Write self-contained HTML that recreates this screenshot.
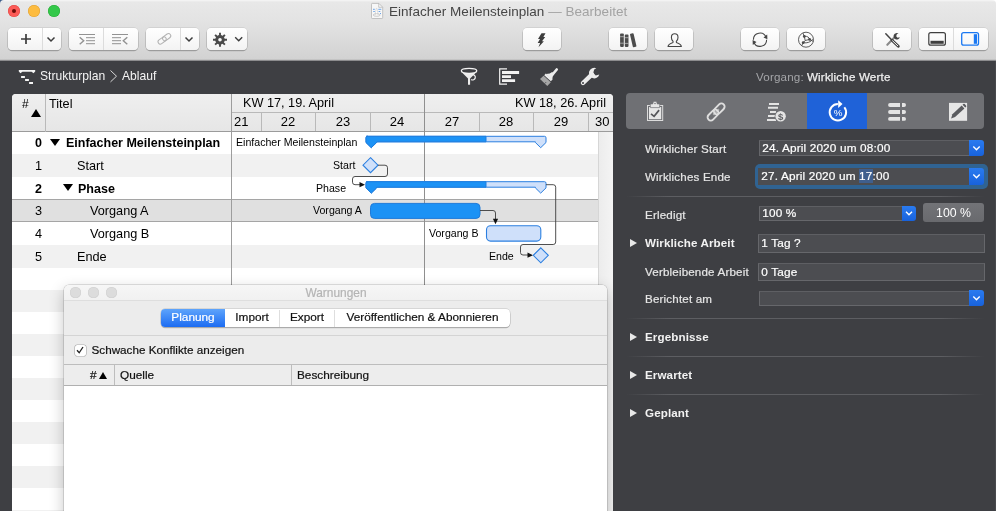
<!DOCTYPE html>
<html lang="de">
<head>
<meta charset="utf-8">
<title>Einfacher Meilensteinplan</title>
<style>
*{box-sizing:border-box;margin:0;padding:0}
html,body{width:996px;height:511px;overflow:hidden;background:#3e3f43;font-family:"Liberation Sans",sans-serif;color:#000}
.abs{position:absolute}
#app{will-change:transform;position:relative;width:996px;height:511px;overflow:hidden;background:#3e3f43}
/* title + toolbar */
#chrome{left:0;top:0;width:996px;height:61px;background:linear-gradient(#f6f6f6 0,#f0f0f0 1px,#e8e8e8 2px,#e3e3e3 22px,#d2d2d2 59px,#c4c4c4 59.500px,#8c8c8e 60.500px,#6a6b6e 61px);border-radius:4px 4px 0 0}
.tl{width:12px;height:12px;border-radius:50%;top:5px}
.tbtn{top:28px;height:22px;background:linear-gradient(#ffffff,#f3f3f3);border-radius:4px;box-shadow:0 0 0 .5px rgba(0,0,0,.13),0 1px 0 .3px rgba(0,0,0,.22)}
.tdiv{top:28px;height:22px;width:1px;background:#dcdcdc}
#title{top:3.500px;left:389px;font-size:13.5px;color:#464646;white-space:nowrap;letter-spacing:.03px}
#title span{color:#a3a3a3}
/* dark bar */
.crumb{color:#f4f4f4;font-size:12.1px;top:69.400px;white-space:nowrap}
/* table */
#tbl{left:12px;top:94px;width:601px;height:417px;background:#fff;border-radius:4px 4px 0 0;overflow:hidden}
.row{left:0;width:586px}
.hd{left:0;top:0;width:601px;height:38px;background:linear-gradient(#efefef,#e6e6e6);border-bottom:1px solid #9b9b9b}
.num{width:34px;text-align:right;font-size:12.700px;left:-4px}
.ttl{font-size:12.7px;white-space:nowrap}
.b{font-weight:bold;font-size:12.5px !important}
.glab{font-size:10.6px;white-space:nowrap;color:#000}
.day{top:20px;font-size:13px;text-align:center;width:54px}
/* warn window */
#warn{-webkit-text-stroke:.2px;left:64px;top:285px;width:543px;height:240px;background:#ececec;border-radius:5px 5px 0 0;box-shadow:0 0 0 .5px rgba(0,0,0,.22),0 5px 15px rgba(0,0,0,.24);overflow:hidden}
.seg{top:25px;font-size:11.800px;text-align:center;color:#111;white-space:nowrap}
/* inspector */
.il{-webkit-text-stroke:.2px;color:#e6e6e6;font-size:11.6px;letter-spacing:.17px;white-space:nowrap;left:645px}
.ih{color:#f2f2f2;font-size:11.6px;letter-spacing:.12px;font-weight:bold;white-space:nowrap;left:645px}
.fld{-webkit-text-stroke:.2px;background:#4c4d51;border:1px solid #66676b;border-top-color:#5e5f63;color:#fff;font-size:11.8px;letter-spacing:.15px;padding-left:2.300px;white-space:nowrap}
.bb{background:linear-gradient(#2a7bf0,#1862dc);border-radius:0 3px 3px 0;width:15px}
.sep{left:626px;width:358px;height:1px;background:linear-gradient(90deg,rgba(93,94,98,0),#5d5e62 12%,#5d5e62 88%,rgba(93,94,98,0))}
.tri{left:630px;width:0;height:0;border-left:7px solid #e8e8e8;border-top:4px solid transparent;border-bottom:4px solid transparent}
</style>
</head>
<body>
<div id="app">

<!-- ===== window chrome ===== -->
<div class="abs" style="left:0;top:0;width:10px;height:10px;background:#3a5a88"></div><div class="abs" style="left:986px;top:0;width:10px;height:10px;background:#fff"></div>
<div id="chrome" class="abs"></div>
<div class="abs tl" style="left:8px;background:#fc5b57;box-shadow:inset 0 0 0 .5px #df4744"></div>
<div class="abs" style="left:12px;top:9px;width:4px;height:4px;border-radius:50%;background:#6b0c08"></div>
<div class="abs tl" style="left:28px;background:#fdbc40;box-shadow:inset 0 0 0 .5px #de9f34"></div>
<div class="abs tl" style="left:48px;background:#34c84a;box-shadow:inset 0 0 0 .5px #27aa35"></div>
<div id="title" class="abs">Einfacher Meilensteinplan <span>— Bearbeitet</span></div>

<!-- toolbar buttons -->
<div class="abs tbtn" style="left:8px;width:53px"></div><div class="abs tdiv" style="left:42px"></div>
<div class="abs tbtn" style="left:69px;width:69px"></div><div class="abs tdiv" style="left:103px"></div>
<div class="abs tbtn" style="left:146px;width:53px"></div><div class="abs tdiv" style="left:180px"></div>
<div class="abs tbtn" style="left:207px;width:40px"></div>
<div class="abs tbtn" style="left:523px;width:38px"></div>
<div class="abs tbtn" style="left:609px;width:38px"></div>
<div class="abs tbtn" style="left:655px;width:38px"></div>
<div class="abs tbtn" style="left:741px;width:38px"></div>
<div class="abs tbtn" style="left:787px;width:38px"></div>
<div class="abs tbtn" style="left:873px;width:38px"></div>
<div class="abs tbtn" style="left:919px;width:69px"></div><div class="abs tdiv" style="left:953px"></div>
<svg class="abs" style="left:0;top:0" width="996" height="61" viewBox="0 0 996 61" fill="none">
 <!-- doc icon -->
 <path d="M372.300 3.400h6.600l3.800 3.800v10.500a.8 .8 0 0 1-.8 .8h-9.600a.8 .8 0 0 1-.8-.8v-13.500a.8 .8 0 0 1 .8-.8z" fill="#f7f7f7" stroke="#b5b5b5" stroke-width=".8"/>
 <path d="M378.700 3.600v3.700h3.800" stroke="#b5b5b5" stroke-width=".7"/>
 <path d="M373 9.300h1.800M378.300 9.300h3M373.300 11.500h1.500M378.600 11.500h1.700M380 13.500h1" stroke="#5b9be8" stroke-width=".9"/>
 <path d="M375.300 14.800l.9-6.400h.8l1.100 6.400" fill="#fff" stroke="#c3c3c3" stroke-width=".5"/>
 <ellipse cx="376.700" cy="15" rx="3.500" ry="1.300" stroke="#b9b9b9" stroke-width=".7"/>
 <!-- plus -->
 <path d="M21 39h10M26 34v10" stroke="#3c3c3c" stroke-width="1.700"/>
 <path d="M47.500 37.500l3.500 3.500l3.500-3.500" stroke="#3c3c3c" stroke-width="1.500"/>
 <!-- indent -->
 <g stroke="#929292" stroke-width="1">
 <path d="M79 34.500h16M86 37.700h9M86 40.700h9M86 43.700h9"/>
 <path d="M79.700 37.200l4 3.500l-4 3.500" stroke-width="1.400"/>
 <path d="M112 34.500h16M112 37.700h9M112 40.700h9M112 43.700h9"/>
 <path d="M127.300 37.200l-4 3.500l4 3.500" stroke-width="1.400"/>
 </g>
 <!-- link -->
 <g transform="translate(164.400 38.800) rotate(-36)" stroke="#b2b2b2" stroke-width="1">
 <rect x="-7.300" y="-2.300" width="9" height="4.600" rx="2.300"/>
 <rect x="-1.700" y="-2.300" width="9" height="4.600" rx="2.300"/>
 </g>
 <path d="M185.500 37.500l3.500 3.500l3.500-3.500" stroke="#3c3c3c" stroke-width="1.500"/>
 <!-- gear -->
 <g transform="translate(220 39.800)">
 <circle r="3.300" stroke="#4a4a4a" stroke-width="3"/>
 <g stroke="#4a4a4a" stroke-width="1.900">
 <path d="M0-4v-3M0 4v3M-4 0h-3M4 0h3M2.800-2.800l2.100-2.100M-2.800 2.800l-2.100 2.100M2.800 2.800l2.100 2.100M-2.800-2.800l-2.100-2.100"/>
 </g></g>
 <path d="M235.200 37.300l3.500 3.400l3.500-3.400" stroke="#3c3c3c" stroke-width="1.400"/>
 <!-- lightning -->
 <path d="M541.500 33.200L545.500 33.200L543.400 37L545.200 37L542 41.200L543.900 41.200L538.500 47.300L540.100 42.900L537.700 42.900L540 38.900L538 38.900Z" fill="#3d3d3d"/>
 <!-- books -->
 <g transform="translate(.5 .4)">
 <g fill="#4c4c4c">
 <rect x="619.600" y="33" width="3.700" height="13.500" rx=".8"/>
 <rect x="624.300" y="34.200" width="3.700" height="12.300" rx=".8"/>
 <rect x="630.900" y="33" width="3.700" height="13.700" rx=".8" transform="rotate(-13 632.700 40)"/>
 </g>
 <path d="M619.600 36.300h3.700M619.600 42.800h3.700M624.300 37.300h3.700M624.300 43h3.700" stroke="#e0e0e0" stroke-width=".6"/>
 <!-- person -->
 <path d="M674.200 33.400c2.300 0 3.300 1.700 3.300 3.600c0 1.700-.8 3-1.500 3.800c-.4 .5-.2 1.300 .5 1.600c2.300 .9 4.300 1.700 4.300 3.700h-13.200c0-2 2-2.800 4.300-3.700c.7-.3 .9-1.100 .5-1.600c-.7-.8-1.500-2.100-1.500-3.800c0-1.900 1-3.600 3.300-3.600z" stroke="#454545" stroke-width="1.100" fill="none"/>
 </g>
 <!-- refresh -->
 <g stroke="#454545" stroke-width="1.100">
 <path d="M753.40 39.70A6.6 6.6 0 0 1 766.12 37.23"/>
 <path d="M766.60 39.70A6.6 6.6 0 0 1 753.88 42.17"/>
 </g>
 <path d="M767.400 39.300l-3.900-1.800l3.700-3z" fill="#454545"/>
 <path d="M752.600 40.100l3.900 1.800l-3.700 3z" fill="#454545"/>
 <!-- share -->
 <g stroke="#4a4a4a" stroke-width=".9">
 <circle cx="806" cy="39.700" r="7.500"/>
 <path d="M804.300 36.400l.9 4.100l4.400-1.100M805.200 40.500l-2 2.200M804.300 36.400l-1.300-3.300M809.600 39.400l3.700 2M803.200 42.700l-1.600 3.200M804.300 36.400c3 -.5 5 1 5.300 3M803.200 42.700c4 .6 7.500-.5 9.500-3.500"/>
 </g>
 <g fill="#4a4a4a"><circle cx="804.300" cy="36.400" r="1.400"/><circle cx="809.600" cy="39.400" r="1.400"/><circle cx="803.200" cy="42.700" r="1.400"/></g>
 <!-- tools -->
 <g stroke-linecap="round">
 <path d="M887.300 44.800l7-7.300" stroke="#8a8a8a" stroke-width="2.100"/>
 <path d="M885.800 33.800l5 5.300" stroke="#444" stroke-width="1.500"/>
 <path d="M892 40.200l6.300 6" stroke="#444" stroke-width="2.900"/>
 <path d="M892.600 40.800l5.100 4.900" stroke="#f4f4f4" stroke-width="1"/>
 </g>
 <path d="M898.500 33.600a3.200 3.200 0 1 0 1.300 3.600l-2.300 .5l-1.300-1.400l.6-2z" fill="#444"/>
 <!-- panels -->
 <rect x="928.800" y="32.600" width="16.600" height="12.600" rx="2" stroke="#3f3f3f" stroke-width="1.200"/>
 <rect x="930.500" y="40.800" width="13.200" height="3" fill="#3f3f3f"/>
 <rect x="961.700" y="32.600" width="16.800" height="12.600" rx="2" stroke="#1a78f2" stroke-width="1.300"/>
 <rect x="973.800" y="34.200" width="3.200" height="9.600" fill="#1a78f2"/>
</svg>


<!-- dark bar -->
<svg class="abs" style="left:0;top:61px" width="620" height="33" viewBox="0 61 620 33" fill="none">
 <!-- outline icon -->
 <path d="M18.800 69.900h16.400v1.700l-1.700 1.700l-1.900-1.500h-9.200l-1.900 1.500l-1.700-1.700z" fill="#f4f4f4"/>
 <path d="M21.100 77h3.800M25.100 80h3.800M29.100 83h3.900" stroke="#f4f4f4" stroke-width="2"/>
 <path d="M110.500 70.500l6 5.700l-6 5.700" stroke="#d8d8d8" stroke-width="1"/>
 <!-- funnel -->
 <path d="M461.300 71.800l6.700 6.700v6.300h2.100v-6.300l6.700-6.700c-2 1.600-13.500 1.600-15.500 0z" fill="#ececec"/>
 <ellipse cx="469.050" cy="70.800" rx="7.700" ry="2.500" stroke="#f2f2f2" stroke-width="1.300"/>
 <path d="M472.500 74.600a2.700 2.700 0 1 1-1.300 5" stroke="#f2f2f2" stroke-width="1.200"/>
 <!-- gantt -->
 <path d="M507 68.900h-7.300v15.300h7.300" stroke="#f2f2f2" stroke-width="1.200"/>
 <path d="M502 72.500h17.100M502 76.600h9M502 80.600h13.100" stroke="#f2f2f2" stroke-width="2.900"/>
 <!-- brush -->
 <path d="M556.700 69.500l-5 6" stroke="#ececec" stroke-width="2.700" stroke-linecap="round"/>
 <path d="M545.800 73.600l6.600 6l-1.500 1.700l-6.700-6z" fill="#ececec"/>
 <path d="M546 74l3.800-.6l2.300 -1.400l2.200 2l-1.600 2.300l-.4 3.800z" fill="#ececec"/>
 <path d="M543.600 75.800l-3.600 3.200l7.300 7l3.500-3.800z" fill="#a6a6a6"/>
 <path d="M546.200 82l-1.400 1.500" stroke="#3e3f43" stroke-width=".7"/>
 <!-- wrench -->
 <path d="M583 83l9-8.700" stroke="#ececec" stroke-width="4.400" stroke-linecap="round"/>
 <path d="M596.300 68.200a5.300 5.300 0 1 0 3 6.300l-3.500 1.100l-2.600-2.500l1-3.600z" fill="#ececec"/>
 <circle cx="583" cy="83" r="1" fill="#3e3f43"/>
</svg>
<div class="abs crumb" style="left:40px">Strukturplan</div>
<div class="abs crumb" style="left:122px">Ablauf</div>


<!-- main table + gantt -->
<div id="tbl" class="abs">
<div class="abs" style="left:0;top:60.30px;width:586px;height:22.70px;background:#f1f1f1"></div>
<div class="abs" style="left:0;top:105px;width:586px;height:23px;background:#e0e0e0;border-top:1px solid #a5a5a5;border-bottom:1px solid #a5a5a5"></div>
<div class="abs" style="left:0;top:151.00px;width:586px;height:22.50px;background:#f1f1f1"></div>
<div class="abs" style="left:0;top:195.55px;width:586px;height:22.05px;background:#f1f1f1"></div>
<div class="abs" style="left:0;top:239.65px;width:586px;height:22.05px;background:#f1f1f1"></div>
<div class="abs" style="left:0;top:283.75px;width:586px;height:22.05px;background:#f1f1f1"></div>
<div class="abs" style="left:0;top:327.85px;width:586px;height:22.05px;background:#f1f1f1"></div>
<div class="abs" style="left:0;top:371.95px;width:586px;height:22.05px;background:#f1f1f1"></div>
<div class="abs" style="left:0;top:416.05px;width:586px;height:22.05px;background:#f1f1f1"></div>

<!-- right gutter -->
<div class="abs" style="left:586px;top:38px;width:15px;height:400px;background:linear-gradient(90deg,#ececec,#f4f4f4);border-left:1px solid #d6d6d6"></div>
<!-- header -->
<div class="abs hd"></div>
<div class="abs" style="left:33px;top:0;width:1px;height:38px;background:#b9b9b9"></div>
<div class="abs" style="left:219px;top:0;width:1px;height:420px;background:#9d9d9d"></div>
<div class="abs" style="left:220px;top:18px;width:381px;height:1px;background:#b9b9b9"></div>
<div class="abs" style="left:412px;top:0;width:1px;height:420px;background:#8f8f8f"></div>
<div class="abs" style="left:249px;top:19px;width:1px;height:18px;background:#b9b9b9"></div>
<div class="abs" style="left:303px;top:19px;width:1px;height:18px;background:#b9b9b9"></div>
<div class="abs" style="left:358px;top:19px;width:1px;height:18px;background:#b9b9b9"></div>
<div class="abs" style="left:467px;top:19px;width:1px;height:18px;background:#b9b9b9"></div>
<div class="abs" style="left:521px;top:19px;width:1px;height:18px;background:#b9b9b9"></div>
<div class="abs" style="left:576px;top:19px;width:1px;height:18px;background:#b9b9b9"></div>
<div class="abs ttl" style="left:10px;top:3px;font-size:12px">#</div>
<div class="abs" style="left:19px;top:15px;width:0;height:0;border-bottom:8px solid #000;border-left:5px solid transparent;border-right:5px solid transparent"></div>
<div class="abs ttl" style="left:37px;top:3px">Titel</div>
<div class="abs ttl" style="left:231px;top:2px">KW 17, 19. April</div>
<div class="abs ttl" style="right:7px;top:2px">KW 18, 26. April</div>
<div class="abs day" style="left:222px;text-align:left">21</div>
<div class="abs day" style="left:249px">22</div>
<div class="abs day" style="left:304px">23</div>
<div class="abs day" style="left:358px">24</div>
<div class="abs day" style="left:413px">27</div>
<div class="abs day" style="left:467px">28</div>
<div class="abs day" style="left:522px">29</div>
<div class="abs day" style="left:583px;width:auto">30</div>
<div class="abs num b" style="top:42px">0</div><div class="abs ttl b" style="left:54px;top:42px">Einfacher Meilensteinplan</div>
<div class="abs num" style="top:65px">1</div><div class="abs ttl" style="left:65px;top:65px">Start</div>
<div class="abs num b" style="top:88px">2</div><div class="abs ttl b" style="left:66px;top:88px">Phase</div>
<div class="abs num" style="top:110px">3</div><div class="abs ttl" style="left:78px;top:110px">Vorgang A</div>
<div class="abs num" style="top:133px">4</div><div class="abs ttl" style="left:78px;top:133px">Vorgang B</div>
<div class="abs num" style="top:156px">5</div><div class="abs ttl" style="left:65px;top:156px">Ende</div>
<div class="abs" style="left:38.200px;top:45.200px;width:0;height:0;border-top:7.500px solid #000;border-left:5px solid transparent;border-right:5px solid transparent"></div>
<div class="abs" style="left:50.600px;top:90.200px;width:0;height:0;border-top:7.500px solid #000;border-left:5px solid transparent;border-right:5px solid transparent"></div>

<svg class="abs" style="left:220px;top:38px" width="381" height="240" viewBox="232 132 381 240" fill="none">
 <!-- summary 0 -->
 <path d="M366.500 136.300h178a1.500 1.500 0 0 1 1.500 1.500v4.700l-5.300 5.200l-5.300-5.200v-.7h-158.800v.7l-5.300 5.200l-5.300-5.200v-4.700a1.500 1.500 0 0 1 1.500-1.500z" fill="#cfe0fa" stroke="#2b7fe0" stroke-width="1"/>
 <path d="M366.500 136.300h119.500v5.500h-109.400v.7l-5.300 5.200l-5.300-5.200v-4.700a1.500 1.500 0 0 1 1.500-1.500z" fill="#1c92f5" stroke="#1f7edf" stroke-width="1"/>
 <!-- start milestone -->
 <path d="M370.500 157.700l7.500 7.500l-7.500 7.500l-7.500-7.500z" fill="#cfe0fa" stroke="#2b7fe0" stroke-width="1.100"/>
 <path d="M378 165.200h7a2.500 2.500 0 0 1 2.500 2.500v6.300a2.500 2.500 0 0 1-2.500 2.500h-30a2.500 2.500 0 0 0-2.500 2.500v3.200a2.500 2.500 0 0 0 2.500 2.500h5" stroke="#3c3c3c" stroke-width=".9"/>
 <path d="M365 184.700l-5.500-2.600v5.200z" fill="#111"/>
 <!-- summary 2 -->
 <path d="M366.500 181.700h178a1.500 1.500 0 0 1 1.500 1.500v4.700l-5.300 5.200l-5.300-5.200v-.7h-158.800v.7l-5.300 5.200l-5.300-5.200v-4.700a1.500 1.500 0 0 1 1.500-1.500z" fill="#cfe0fa" stroke="#2b7fe0" stroke-width="1"/>
 <path d="M366.500 181.700h119.500v5.500h-109.400v.7l-5.300 5.200l-5.300-5.200v-4.700a1.500 1.500 0 0 1 1.500-1.500z" fill="#1c92f5" stroke="#1f7edf" stroke-width="1"/>
 <path d="M546 184.700h7.200a2.500 2.500 0 0 1 2.500 2.500v54.800a2.500 2.500 0 0 1-2.500 2.500h-30.200a2.500 2.500 0 0 0-2.500 2.500v5.500a2.500 2.500 0 0 0 2.500 2.500h5" stroke="#3c3c3c" stroke-width=".9"/>
 <path d="M533 255.200l-5.500-2.600v5.200z" fill="#111"/>
 <!-- A -->
 <rect x="370.500" y="203.400" width="109.500" height="15" rx="4" fill="#1c92f5" stroke="#1f7ad9" stroke-width="1"/>
 <path d="M480 210.500h13a2.500 2.500 0 0 1 2.500 2.500v6" stroke="#3c3c3c" stroke-width=".9"/>
 <path d="M495.500 224.300l-2.600-5.500h5.200z" fill="#111"/>
 <!-- B -->
 <rect x="486.500" y="225.700" width="54.300" height="15.400" rx="4" fill="#cfe0fa" stroke="#2b7fe0" stroke-width="1.100"/>
 <!-- end milestone -->
 <path d="M540.800 247.800l7.500 7.500l-7.500 7.500l-7.500-7.500z" fill="#cfe0fa" stroke="#2b7fe0" stroke-width="1.100"/>
</svg>
<div class="abs glab" style="left:224px;top:41.500px">Einfacher Meilensteinplan</div>
<div class="abs glab" style="left:321px;top:64.500px">Start</div>
<div class="abs glab" style="left:304px;top:87.500px">Phase</div>
<div class="abs glab" style="left:301px;top:110px">Vorgang A</div>
<div class="abs glab" style="left:417px;top:133px">Vorgang B</div>
<div class="abs glab" style="left:477px;top:155.500px">Ende</div>

</div>


<!-- Warnungen window -->
<div id="warn" class="abs">
 <div class="abs" style="left:0;top:0;width:544px;height:15px;background:linear-gradient(#f6f6f6,#f1f1f1)"></div>
 <div class="abs" style="left:6px;top:2.300px;width:10.500px;height:10.500px;border-radius:50%;background:#dcdcdc;box-shadow:inset 0 0 0 .5px #cfcfcf"></div>
 <div class="abs" style="left:24px;top:2.300px;width:10.500px;height:10.500px;border-radius:50%;background:#dcdcdc;box-shadow:inset 0 0 0 .5px #cfcfcf"></div>
 <div class="abs" style="left:42px;top:2.300px;width:10.500px;height:10.500px;border-radius:50%;background:#dcdcdc;box-shadow:inset 0 0 0 .5px #cfcfcf"></div>
 <div class="abs" style="left:0;top:.500px;width:544px;text-align:center;font-size:11.900px;color:#b4b4b4">Warnungen</div>
 <div class="abs" style="left:0;top:15px;width:544px;height:1px;background:#dedede"></div>
 <!-- segmented -->
 <div class="abs" style="left:97px;top:24px;width:349px;height:17.800px;background:#fff;border-radius:4px;box-shadow:0 0 0 .5px rgba(0,0,0,.18),0 1px 0 .2px rgba(0,0,0,.2)"></div>
 <div class="abs" style="left:97px;top:24px;width:64px;height:17.800px;background:linear-gradient(#5ea4fb,#1c6cf2);border-radius:4px 0 0 4px"></div>
 <div class="abs" style="left:215px;top:25px;width:1px;height:17px;background:#dedede"></div>
 <div class="abs" style="left:270px;top:25px;width:1px;height:17px;background:#dedede"></div>
 <div class="abs seg" style="left:97px;width:64px;color:#fff">Planung</div>
 <div class="abs seg" style="left:161px;width:54px">Import</div>
 <div class="abs seg" style="left:216px;width:54px">Export</div>
 <div class="abs seg" style="left:271px;width:175px">Veröffentlichen &amp; Abonnieren</div>
 <div class="abs" style="left:0;top:50px;width:544px;height:1px;background:#d4d4d4"></div>
 <!-- checkbox -->
 <div class="abs" style="left:10.500px;top:59.500px;width:11px;height:11px;background:#fff;border-radius:2.500px;box-shadow:0 0 0 .6px #a9a9a9"></div>
 <svg class="abs" style="left:10px;top:59px" width="12" height="12" viewBox="0 0 12 12" fill="none"><path d="M3 6.300l2.200 2.500l3.800-5.800" stroke="#222" stroke-width="1.300"/></svg>
 <div class="abs" style="left:27.500px;top:58.200px;font-size:11.700px;color:#111;white-space:nowrap">Schwache Konflikte anzeigen</div>
 <!-- table header -->
 <div class="abs" style="left:0;top:79px;width:544px;height:21.500px;background:#ededed;border-top:1px solid #bdbdbd;border-bottom:1px solid #b0b0b0"></div>
 <div class="abs" style="left:50px;top:80px;width:1px;height:19.500px;background:#bdbdbd"></div>
 <div class="abs" style="left:227px;top:80px;width:1px;height:19.500px;background:#bdbdbd"></div>
 <div class="abs" style="left:26px;top:83px;font-size:11.800px;color:#111">#</div>
 <div class="abs" style="left:35px;top:87px;width:0;height:0;border-bottom:7.500px solid #000;border-left:4.500px solid transparent;border-right:4.500px solid transparent"></div>
 <div class="abs" style="left:56px;top:83px;font-size:11.800px;color:#111">Quelle</div>
 <div class="abs" style="left:233px;top:83px;font-size:11.800px;color:#111">Beschreibung</div>
 <div class="abs" style="left:0;top:100.500px;width:544px;height:140px;background:#fff"></div>
</div>


<!-- inspector -->
<div class="abs" style="left:995px;top:61px;width:1px;height:450px;background:#48494d;z-index:5"></div>
<div class="abs" style="left:613px;top:62px;width:383px;height:449px;background:#3e3f43"></div>
<div class="abs" style="left:756px;top:69.700px;font-size:11.600px;letter-spacing:.17px;color:#a4a5a8;white-space:nowrap">Vorgang:</div>
<div class="abs" style="left:807px;top:69.700px;font-size:11.600px;letter-spacing:.17px;-webkit-text-stroke:.25px;color:#f0f0f0;white-space:nowrap">Wirkliche Werte</div>
<div class="abs" style="left:626px;top:93px;width:358px;height:36px;background:#6f7074;border-radius:4px;overflow:hidden">
 <div class="abs" style="left:181px;top:0;width:60px;height:36px;background:#1f62d8"></div>
</div>
<svg class="abs" style="left:626px;top:93px" width="358" height="36" viewBox="626 93 358 36" fill="none">
 <!-- clipboard -->
 <rect x="647.500" y="105.500" width="15.200" height="15" stroke="#dcdcdc" stroke-width="1"/>
 <rect x="649" y="107" width="12.200" height="12.200" fill="#e6e6e6"/>
 <path d="M650.300 107.600v-3.700h2.500v-.5a2.200 2.200 0 0 1 4.400 0v.5h2.500v3.700z" fill="#e6e6e6" stroke="#6f7074" stroke-width=".7"/>
 <circle cx="655" cy="103.500" r=".75" fill="#6f7074"/>
 <path d="M651 113.800l3.100 2.600l5-6.300" stroke="#55565a" stroke-width="1.700"/>
 <!-- link -->
 <g transform="translate(716.100 112) rotate(-45)" stroke="#dedede" stroke-width="1.900">
 <path d="M-4 0h8" stroke="#b2b3b5" stroke-width="2.200"/>
 <rect x="-10.700" y="-3.200" width="12.600" height="6.400" rx="3.200"/>
 <rect x="-1.900" y="-3.200" width="12.600" height="6.400" rx="3.200"/>
 </g>
 <!-- money -->
 <path d="M769 104h10M768 107.800h10M770 112h6M768 116h7M767 120h9" stroke="#e4e4e4" stroke-width="1.900"/>
 <circle cx="780.600" cy="116.300" r="5.900" fill="#6f7074"/>
 <circle cx="780.600" cy="116.300" r="5.200" fill="#e4e4e4"/>
 <text x="780.600" y="119.700" font-size="9.500" font-weight="bold" fill="#606165" text-anchor="middle" font-family="Liberation Sans, sans-serif">$</text>
 <!-- percent -->
 <path d="M837.90 104.10A8.2 8.2 0 1 0 844.36 107.25" stroke="#fff" stroke-width="2"/>
 <path d="M838.200 100.300l4.300 3.800l-4.300 3.800z" fill="#fff"/>
 <text x="838" y="116.200" font-size="9.800" fill="#fff" text-anchor="middle" font-family="Liberation Sans, sans-serif">%</text>
 <!-- list -->
 <g fill="#e4e4e4">
 <path d="M890 103.100h10v3.800h-10a1.900 1.900 0 0 1 0-3.800zM902 103.100h2.100a1.900 1.900 0 0 1 0 3.800h-2.100z"/>
 <path d="M890 110.100h10v3.800h-10a1.900 1.900 0 0 1 0-3.800zM902 110.100h2.100a1.900 1.900 0 0 1 0 3.800h-2.100z"/>
 <path d="M890 117h10v3.800h-10a1.900 1.900 0 0 1 0-3.800zM902 117h2.100a1.900 1.900 0 0 1 0 3.800h-2.100z"/>
 </g>
 <!-- pencil -->
 <rect x="949" y="102.900" width="18.100" height="17.900" fill="#e6e6e6"/>
 <path d="M951.100 118.500l1.300-4.300l9.300-8.700l2.700 2.900l-9.300 8.700z" fill="#5a5b5f"/>
 <path d="M962.500 104.800l.8-.7a1 1 0 0 1 1.400 0l1.300 1.400a1 1 0 0 1 0 1.400l-.8 .7z" fill="#5a5b5f"/>
</svg>
<div class="abs il" style="top:142px">Wirklicher Start</div>
<div class="abs fld" style="left:759px;top:140px;width:212px;height:16px;line-height:14px">24. April 2020 um 08:00</div>
<div class="abs bb" style="left:969px;top:140px;height:16px"></div>
<div class="abs" style="left:754.500px;top:164px;width:233.500px;height:24.500px;border-radius:5px;background:#2e6aa0;opacity:.85"></div>
<div class="abs il" style="top:170px">Wirkliches Ende</div>
<div class="abs fld" style="left:758px;top:167.500px;width:213px;height:17px;line-height:15px;background:#4c4d51;border-color:#4c4d51">27. April 2020 um <span style="background:#3f5f8e">17</span>:00</div>
<div class="abs bb" style="left:969px;top:167.500px;height:17px"></div>
<div class="abs sep" style="top:196px"></div>
<div class="abs il" style="top:208px">Erledigt</div>
<div class="abs fld" style="left:759px;top:205.500px;width:145px;height:15px;line-height:13px">100 %</div>
<div class="abs bb" style="left:902px;top:205.500px;height:15px;width:14px"></div>
<div class="abs" style="left:923px;top:203.200px;width:61px;height:18.500px;border-radius:3px;background:linear-gradient(#727377,#696a6e);color:#fff;font-size:12.300px;text-align:center;line-height:20px">100 %</div>
<div class="abs tri" style="top:238.500px"></div>
<div class="abs ih" style="top:236px">Wirkliche Arbeit</div>
<div class="abs fld" style="left:758px;top:234px;width:227px;height:18.500px;line-height:17px">1 Tag ?</div>
<div class="abs il" style="top:265px">Verbleibende Arbeit</div>
<div class="abs fld" style="left:758px;top:262.500px;width:227px;height:18.500px;line-height:17px">0 Tage</div>
<div class="abs il" style="top:292.200px">Berichtet am</div>
<div class="abs fld" style="left:759px;top:290.500px;width:212px;height:15px"></div>
<div class="abs bb" style="left:969px;top:290px;height:16px"></div>
<div class="abs sep" style="top:318px"></div>
<div class="abs tri" style="top:333px"></div>
<div class="abs ih" style="top:329.600px">Ergebnisse</div>
<div class="abs sep" style="top:356px"></div>
<div class="abs tri" style="top:371px"></div>
<div class="abs ih" style="top:367.600px">Erwartet</div>
<div class="abs sep" style="top:394px"></div>
<div class="abs tri" style="top:409px"></div>
<div class="abs ih" style="top:405.600px">Geplant</div>
<svg class="abs" style="left:960px;top:135px" width="30" height="175" viewBox="960 135 30 175" fill="none" stroke="#fff" stroke-width="1.400">
 <path d="M973.300 146.500l3.200 3.200l3.200-3.200"/>
 <path d="M973.300 174.500l3.200 3.200l3.200-3.200"/>
 <path d="M906 211.500l3 3l3-3" transform="translate(0 0)"/>
 <path d="M973.300 296.500l3.200 3.200l3.200-3.200"/>
</svg>
<svg class="abs" style="left:900px;top:205px" width="18" height="16" viewBox="900 205 18 16" fill="none" stroke="#fff" stroke-width="1.400"><path d="M906 211.700l3 3l3-3"/></svg>


</div>
</body>
</html>
